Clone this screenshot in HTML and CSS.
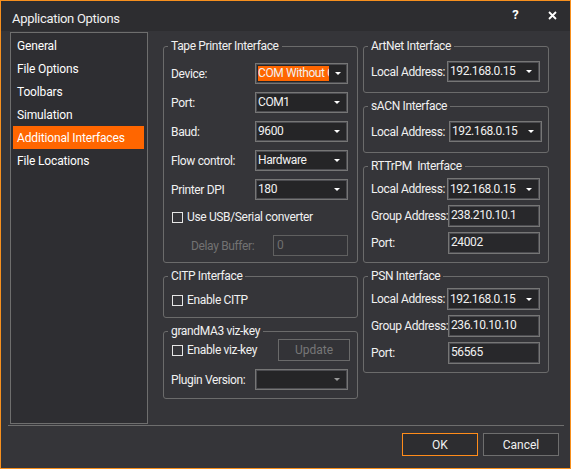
FILE: index.html
```html
<!DOCTYPE html>
<html lang="en">
<head>
  <meta charset="UTF-8" />
  <title>Application Options</title>
  <link rel="stylesheet" href="styles.css">
</head>
<body>
  <div class="window">
    <div class="titlebar">
      <span class="title">Application Options</span>
      <span class="tb-btn help">?</span>
      <span class="tb-btn close">
        <svg width="9" height="9" viewBox="0 0 9 9"><path d="M1 1 L8 8 M8 1 L1 8" stroke="#fff" stroke-width="1.8"/></svg>
      </span>
    </div>

    <div class="main">
      <ul class="nav">
        <li class="nav-item">General</li>
        <li class="nav-item">File Options</li>
        <li class="nav-item">Toolbars</li>
        <li class="nav-item">Simulation</li>
        <li class="nav-item active">Additional Interfaces</li>
        <li class="nav-item">File Locations</li>
      </ul>

      <div class="panel">
        <div class="col col-left">
          <fieldset class="group tape">
            <legend>Tape Printer Interface</legend>
            <div class="row">
              <span class="lbl">Device:</span>
              <div class="select"><span class="value picked">COM Without Cable</span><span class="arrow"></span></div>
            </div>
            <div class="row">
              <span class="lbl">Port:</span>
              <div class="select"><span class="value">COM1</span><span class="arrow"></span></div>
            </div>
            <div class="row">
              <span class="lbl">Baud:</span>
              <div class="select"><span class="value">9600</span><span class="arrow"></span></div>
            </div>
            <div class="row">
              <span class="lbl">Flow control:</span>
              <div class="select"><span class="value">Hardware</span><span class="arrow"></span></div>
            </div>
            <div class="row">
              <span class="lbl">Printer DPI</span>
              <div class="select"><span class="value">180</span><span class="arrow"></span></div>
            </div>
            <label class="check usb"><span class="box"></span>Use USB/Serial converter</label>
            <div class="row delay">
              <span class="lbl disabled">Delay Buffer:</span>
              <div class="text-input disabled">0</div>
            </div>
          </fieldset>

          <fieldset class="group citp">
            <legend>CITP Interface</legend>
            <label class="check"><span class="box"></span>Enable CITP</label>
          </fieldset>

          <fieldset class="group vizkey">
            <legend>grandMA3 viz-key</legend>
            <div class="row">
              <label class="check"><span class="box"></span>Enable viz-key</label>
              <button class="btn update" disabled>Update</button>
            </div>
            <div class="row">
              <span class="lbl">Plugin Version:</span>
              <div class="select"><span class="value"></span><span class="arrow dim"></span></div>
            </div>
          </fieldset>
        </div>

        <div class="col col-right">
          <fieldset class="group short">
            <legend>ArtNet Interface</legend>
            <div class="row">
              <span class="lbl">Local Address:</span>
              <div class="select"><span class="value">192.168.0.15</span><span class="arrow"></span></div>
            </div>
          </fieldset>

          <fieldset class="group short sacn">
            <legend>sACN Interface</legend>
            <div class="row">
              <span class="lbl">Local Address:</span>
              <div class="select"><span class="value">192.168.0.15</span><span class="arrow"></span></div>
            </div>
          </fieldset>

          <fieldset class="group net">
            <legend>RTTrPM&nbsp; Interface</legend>
            <div class="row">
              <span class="lbl">Local Address:</span>
              <div class="select"><span class="value">192.168.0.15</span><span class="arrow"></span></div>
            </div>
            <div class="row">
              <span class="lbl">Group Address:</span>
              <div class="text-input">238.210.10.1</div>
            </div>
            <div class="row">
              <span class="lbl">Port:</span>
              <div class="text-input">24002</div>
            </div>
          </fieldset>

          <fieldset class="group net">
            <legend>PSN Interface</legend>
            <div class="row">
              <span class="lbl">Local Address:</span>
              <div class="select"><span class="value">192.168.0.15</span><span class="arrow"></span></div>
            </div>
            <div class="row">
              <span class="lbl">Group Address:</span>
              <div class="text-input">236.10.10.10</div>
            </div>
            <div class="row">
              <span class="lbl">Port:</span>
              <div class="text-input">56565</div>
            </div>
          </fieldset>
        </div>
      </div>
    </div>

    <div class="footer">
      <button class="btn ok">OK</button>
      <button class="btn">Cancel</button>
    </div>
  </div>
</body>
</html>
```

FILE: styles.css
```css
body {
  margin: 0;
  background: #333337;
  font-family: Roboto, 'Liberation Sans', sans-serif;
  font-size: 12px;
  color: #f1f1f1;
}

.window {
  width: 571px;
  height: 469px;
  box-sizing: border-box;
  border: 1px solid #f7901e;
  background: #353539;
  display: flex;
  flex-direction: column;
}

/* title bar */
.titlebar {
  height: 30px;
  flex: none;
  background: #2d2d30;
  display: flex;
  align-items: center;
  padding: 4px 0 0 11px;
  box-sizing: border-box;
}

.title {
  font-size: 13px;
  letter-spacing: -0.3px;
  flex: 1;
}

.tb-btn {
  color: #fff;
  font-weight: bold;
  font-size: 13px;
  width: 35px;
  text-align: center;
  margin-top: -7px;
}

.tb-btn.close {
  width: 36px;
  display: flex;
  justify-content: center;
  padding-left: 1px;
  margin-top: -6px;
}

/* main area */
.main {
  height: 394px;
  flex: none;
  display: flex;
  padding: 1px 0 0 9px;
  box-sizing: border-box;
}

.nav {
  list-style: none;
  margin: 0;
  width: 138px;
  height: 392px;
  box-sizing: border-box;
  padding: 1px 3px 0 2px;
  background: #2e2e32;
  border: 1px solid #6e6e6e;
}

.nav-item {
  height: 23px;
  line-height: 24px;
  padding-left: 4px;
  color: #fff;
  letter-spacing: -0.15px;
}

.nav-item.active {
  background: #ff6600;
}

.panel {
  display: flex;
  gap: 5px;
  margin-left: 15px;
  padding-top: 7px;
}

.col {
  display: flex;
  flex-direction: column;
  gap: 6px;
}

.col-left .group {
  width: 195px;
}

.col-right .group {
  width: 186px;
}

/* group boxes */
.group {
  margin: 0;
  min-width: 0;
  box-sizing: border-box;
  border: 1px solid #6b6b6b;
  border-radius: 3px;
  padding: 0 8px 6px 7px;
  white-space: nowrap;
  letter-spacing: -0.35px;
}

.group legend {
  line-height: 14px;
  padding: 0 3px;
  margin-left: -3px;
}

.row {
  display: flex;
  align-items: center;
}

.lbl {
  width: 84px;
  flex: none;
}

.lbl.disabled {
  color: #727272;
  padding-left: 20px;
  width: 64px;
}

.tape {
  padding-top: 10px;
  padding-right: 9px;
}

.tape .row + .row {
  margin-top: 8px;
}

.tape .usb {
  margin-top: 9px;
}

.tape .row.delay {
  margin-top: 10px;
}

.citp {
  padding-top: 9px;
  padding-bottom: 9px;
}

.vizkey {
  padding-top: 1px;
  padding-bottom: 8px;
  padding-right: 9px;
}

.vizkey .row + .row {
  margin-top: 8px;
}

.short {
  padding-top: 8px;
  padding-bottom: 10px;
}

.col-right .lbl {
  width: 76px;
}

.col-right .sacn {
  padding-right: 6px;
}

.col-right .sacn .lbl {
  width: 78px;
}

.net {
  padding-top: 5px;
  padding-bottom: 8px;
}

.net .row + .row {
  margin-top: 5px;
}

.net .select,
.net .text-input {
  height: 22px;
}

.net .text-input {
  margin-left: 1px;
  width: 92px;
}

/* controls */
.select {
  width: 93px;
  height: 21px;
  box-sizing: border-box;
  border: 1px solid #767676;
  box-shadow: inset 0 0 0 1px #4c4c50;
  background: #252527;
  display: flex;
  align-items: center;
  padding: 2px 7px 2px 2px;
}

.select .value {
  flex: 1;
  white-space: nowrap;
  overflow: hidden;
  font-size: 12px;
  line-height: 15px;
  letter-spacing: -0.4px;
}

.select .value.picked {
  flex: none;
  width: 71px;
  background: #ff6600;
  margin-right: auto;
}

.arrow {
  flex: none;
  width: 0;
  height: 0;
  margin-left: 6px;
  border-left: 3px solid transparent;
  border-right: 3px solid transparent;
  border-top: 3px solid #fff;
}

.arrow.dim {
  border-top-color: #9a9a9a;
}

.text-input {
  width: 93px;
  height: 21px;
  box-sizing: border-box;
  border: 1px solid #767676;
  box-shadow: inset 0 0 0 1px #4c4c50;
  background: #28282b;
  padding: 0 2px;
  line-height: 19px;
  font-size: 12px;
  letter-spacing: -0.4px;
}

.text-input.disabled {
  width: 75px;
  margin-left: auto;
  background: #333337;
  border-color: #606060;
  box-shadow: none;
  color: #6f6f6f;
  padding-left: 3px;
}

.check {
  display: flex;
  align-items: center;
  height: 16px;
  padding-left: 1px;
}

.check .box {
  width: 11px;
  height: 11px;
  box-sizing: border-box;
  border: 1px solid #e6e6e6;
  margin-right: 4px;
}

.btn {
  width: 76px;
  height: 23px;
  box-sizing: border-box;
  background: #2d2d30;
  border: 1px solid #6e6e6e;
  color: #f1f1f1;
  font-family: Roboto, 'Liberation Sans', sans-serif;
  font-size: 12px;
  padding: 0;
}

.btn.ok {
  border-color: #ff8c1a;
}

.btn.update {
  width: 72px;
  height: 22px;
  margin-left: auto;
  margin-right: -2px;
  background: #333337;
  border-color: #6a6a6a;
  color: #777;
}

/* footer */
.footer {
  flex: 1;
  margin: 0 6px 0 7px;
  border-top: 1px solid #6e6e6e;
  display: flex;
  justify-content: flex-end;
  align-items: flex-start;
  gap: 5px;
  padding: 7px 5px 0 0;
}
```
